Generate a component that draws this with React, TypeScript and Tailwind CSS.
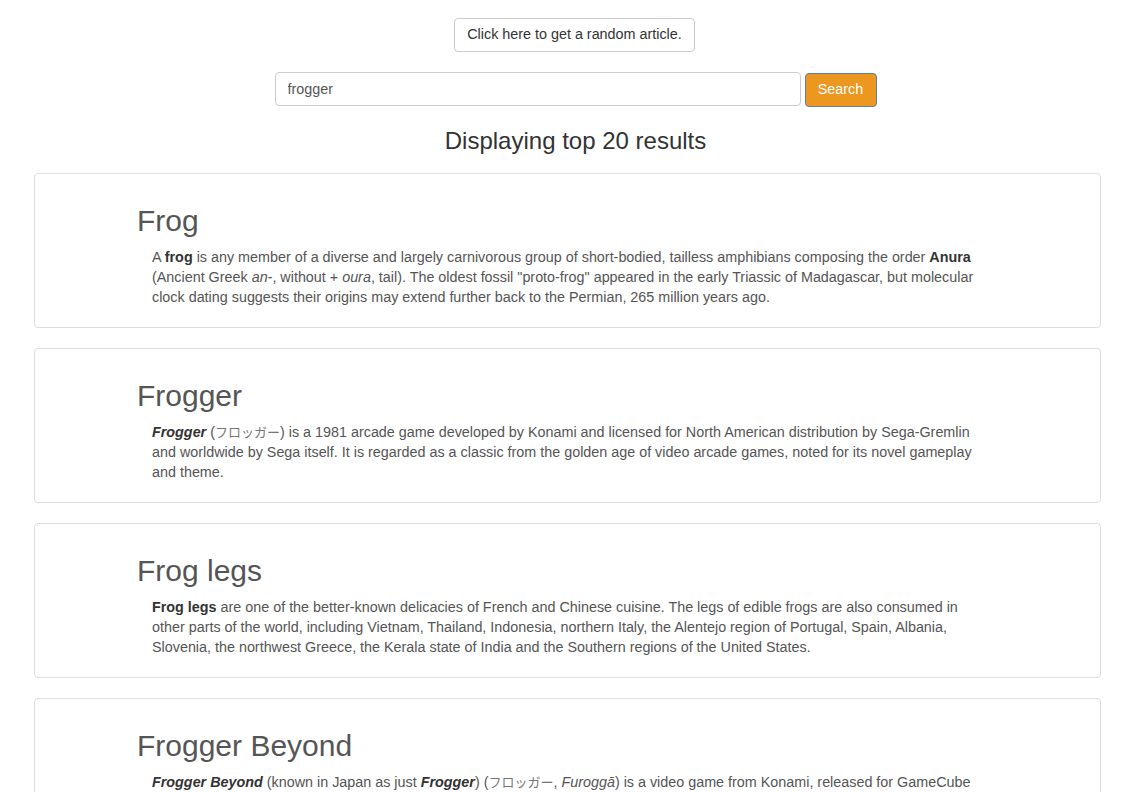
import React from "react";

type Article = {
  title: string;
  body: React.ReactNode;
};

const jp = "font-['Noto_Sans_CJK_JP',sans-serif] text-[13px] text-[#777]";

const articles: Article[] = [
  {
    title: "Frog",
    body: (
      <>
        A <b className="text-[#333]">frog</b> is any member of a diverse and largely carnivorous group of
        short-bodied, tailless amphibians composing the order <b className="text-[#333]">Anura</b> (Ancient
        Greek <i>an-</i>, without + <i>oura</i>, tail). The oldest fossil "proto-frog" appeared in the early
        Triassic of Madagascar, but molecular clock dating suggests their origins may extend further back to
        the Permian, 265 million years ago.
      </>
    ),
  },
  {
    title: "Frogger",
    body: (
      <>
        <b className="text-[#333]">
          <i>Frogger</i>
        </b>{" "}
        (<span className={jp}>フロッガー</span>) is a 1981 arcade game developed by Konami and licensed for North
        American distribution by Sega-Gremlin and worldwide by Sega itself. It is regarded as a classic from
        the golden age of video arcade games, noted for its novel gameplay and theme.
      </>
    ),
  },
  {
    title: "Frog legs",
    body: (
      <>
        <b className="text-[#333]">Frog legs</b> are one of the better-known delicacies of French and Chinese
        cuisine. The legs of edible frogs are also consumed in other parts of the world, including Vietnam,
        Thailand, Indonesia, northern Italy, the Alentejo region of Portugal, Spain, Albania, Slovenia, the
        northwest Greece, the Kerala state of India and the Southern regions of the United States.
      </>
    ),
  },
  {
    title: "Frogger Beyond",
    body: (
      <>
        <b className="text-[#333]">
          <i>Frogger Beyond</i>
        </b>{" "}
        (known in Japan as just{" "}
        <b className="text-[#333]">
          <i>Frogger</i>
        </b>
        ) (<span className={jp}>フロッガー</span>, <i>Furoggā</i>) is a video game from Konami, released for
        GameCube and PlayStation 2 in 2002. It is one of the many games in the Frogger series.
      </>
    ),
  },
  {
    title: "Frogger 2: Swampy's Revenge",
    body: (
      <>
        <b className="text-[#333]">
          <i>Frogger 2: Swampy's Revenge</i>
        </b>{" "}
        is a 2000 action game developed by Hasbro Interactive and released for Windows, Dreamcast and Game Boy
        Color.
      </>
    ),
  },
];

function ResultCard({ article }: { article: Article }) {
  return (
    <div className="border border-[#ddd] rounded-[4px] bg-white pt-[30px] pb-[20px] mb-[20px]">
      <h2 className="ml-[102px] text-[30px] leading-[33px] text-[#555] mb-[10px]">{article.title}</h2>
      <p className="ml-[117px] w-[832px] text-[14.35px] leading-[20px] text-[#555]">{article.body}</p>
    </div>
  );
}

export default function App() {
  return (
    <div className="min-h-screen bg-white font-['Liberation_Sans',Arial,sans-serif] text-[#333] pt-[18px]">
      <div className="flex justify-center">
        <button className="h-[34px] px-[12px] border border-[#ccc] rounded-[4px] bg-white text-[14.35px] text-[#333] ml-[9px]">
          Click here to get a random article.
        </button>
      </div>

      <div className="flex justify-center mt-[20px] ml-[11px]">
        <input
          className="w-[526px] h-[34px] px-[12px] border border-[#ccc] rounded-[4px] text-[14.35px] text-[#555] outline-none"
          defaultValue="frogger"
          readOnly
        />
        <button className="ml-[4px] mt-[1px] w-[72px] h-[34px] border border-[#5d7fa8] rounded-[4px] bg-[#ec971f] text-white text-[14.35px]">
          Search
        </button>
      </div>

      <h3 className="text-center text-[24px] leading-[26px] text-[#333] mt-[21px] mb-[19px] ml-[11px]">
        Displaying top 20 results
      </h3>

      <div className="ml-[34px] w-[1067px]">
        {articles.map((a) => (
          <ResultCard key={a.title} article={a} />
        ))}
      </div>
    </div>
  );
}
